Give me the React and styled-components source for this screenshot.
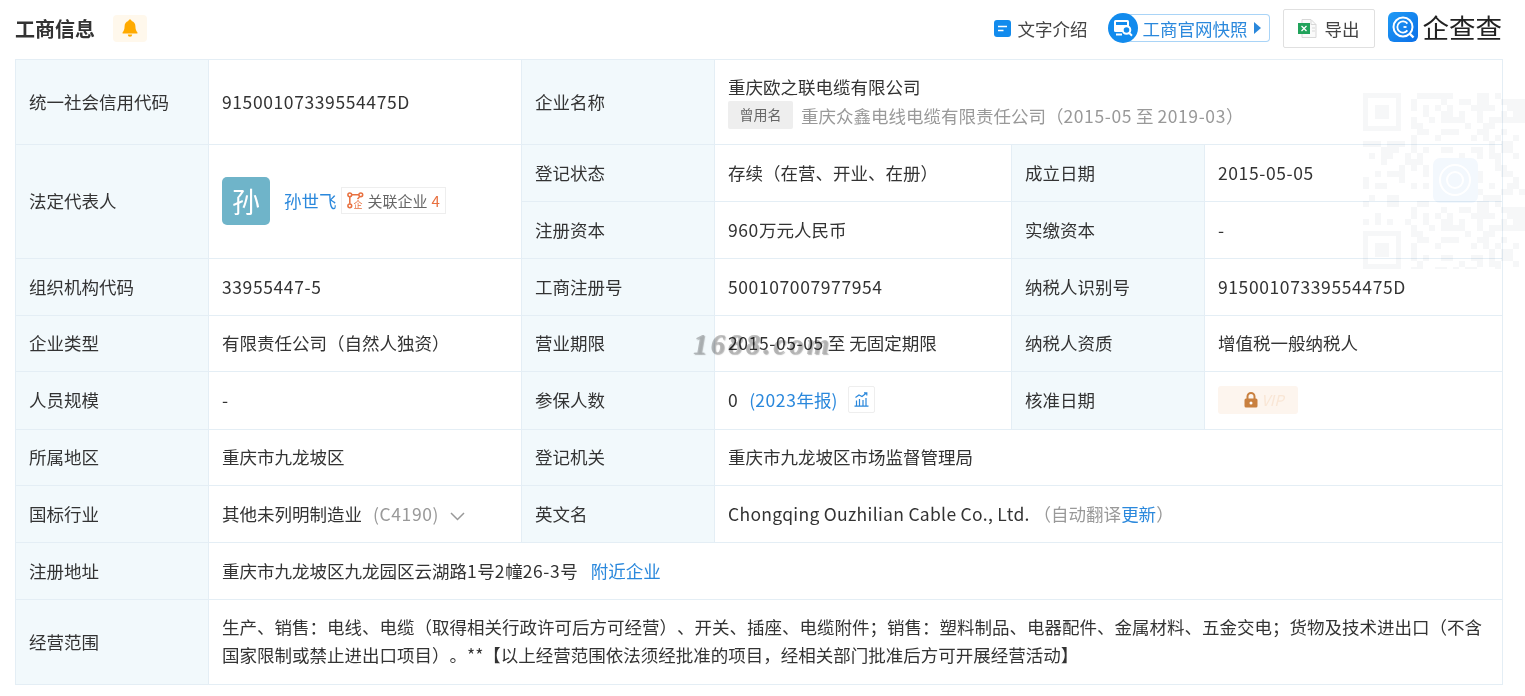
import React from 'react';
import styled, { createGlobalStyle } from 'styled-components';

const GlobalStyle = createGlobalStyle`
  html, body {
    margin: 0;
    padding: 0;
    background: #fff;
    overflow: hidden;
  }
  body {
    font-family: "Noto Sans CJK SC", "Liberation Sans", sans-serif;
    color: #333;
    text-spacing-trim: space-all;
  }
`;

const blue = '#2a88dc';

const qrCells = () => {
  const cells = [];
  let seed = 71;
  for (let y = 0; y < 30; y++) {
    for (let x = 0; x < 28; x++) {
      seed = (seed * 137 + 59) % 1009;
      const inFinder = (x < 8 && y < 8) || (x < 8 && y > 21);
      const inLogo = x > 10 && x < 19 && y > 10 && y < 19;
      if (!inFinder && !inLogo && seed % 5 < 2) cells.push([x, y]);
    }
  }
  return cells;
};

const Finder = ({ y }) => (
  <g>
    <rect x="2.5" y={y + 2.500} width="33" height="33" fill="none" stroke="#f6f7f8" strokeWidth="5" />
    <rect x="12" y={y + 12} width="14" height="14" fill="#f6f7f8" />
  </g>
);

const LogoMark = () => (
  <svg width="30" height="30" viewBox="0 0 30 30">
    <defs>
      <linearGradient id="logoBlue" x1="0" y1="0" x2="1" y2="1">
        <stop offset="0" stopColor="#1f9bf5" />
        <stop offset="1" stopColor="#0b6fe8" />
      </linearGradient>
    </defs>
    <rect width="30" height="30" rx="6" fill="url(#logoBlue)" />
    <circle cx="15" cy="15" r="9.500" fill="none" stroke="#fff" strokeWidth="2" />
    <path d="M19.400 11.600a5.600 5.600 0 1 0 0 6.800" fill="none" stroke="#fff" strokeWidth="1.800" />
    <path d="M15.500 15h3" stroke="#fff" strokeWidth="1.800" />
    <path d="M21.500 21.500l4 4" stroke="#fff" strokeWidth="2.400" />
  </svg>
);

const App = () => (
  <Page>
    <GlobalStyle />
    <Header>
      <TitleGroup>
        <Title>工商信息</Title>
        <BellBadge>
          <svg width="16" height="18" viewBox="0 0 16 18">
            <path d="M8 0.500c.9 0 1.500.6 1.600 1.400 2.500.7 3.800 2.800 3.800 5.400 0 3 .7 4.600 2 6v1.200H.6v-1.200c1.300-1.400 2-3 2-6 0-2.600 1.300-4.700 3.800-5.400C6.500 1.100 7.100.5 8 .5z" fill="#ffaa00" />
            <path d="M5.800 15.600h4.400a2.200 2.200 0 0 1-4.400 0z" fill="#ffaa00" />
          </svg>
        </BellBadge>
      </TitleGroup>
      <Actions>
        <IntroLink>
          <svg width="17" height="17" viewBox="0 0 17 17">
            <rect width="17" height="17" rx="3" fill="#128bed" />
            <path d="M4 6.500h9M4 10.500h5.500" stroke="#fff" strokeWidth="1.600" />
          </svg>
          文字介绍
        </IntroLink>
        <SnapshotLink>
          <SnapshotCircle>
            <svg width="20" height="18" viewBox="0 0 20 18">
              <rect x="1" y="1" width="15" height="12" rx="1.500" fill="#fff" />
              <rect x="3" y="3" width="11" height="3" fill="#128bed" />
              <path d="M3 15.500h6" stroke="#fff" strokeWidth="2" />
              <circle cx="13.500" cy="11" r="3.800" fill="#128bed" stroke="#fff" strokeWidth="2" />
              <path d="M16 13.800l3 3" stroke="#fff" strokeWidth="2" />
            </svg>
          </SnapshotCircle>
          工商官网快照
          <Arrow />
        </SnapshotLink>
        <ExportButton>
          <svg width="19" height="19" viewBox="0 0 19 19">
            <path d="M4 .5h9l5 5v13H4z" fill="#fafafa" stroke="#d8d8d8" />
            <path d="M13 1v4.500h5M14 9h3M14 12h3" fill="none" stroke="#d8d8d8" />
            <rect x="0" y="4" width="12" height="11" fill="#21a35b" />
            <path d="M3.500 7l5 5M8.500 7l-5 5" stroke="#fff" strokeWidth="1.300" />
          </svg>
          导出
        </ExportButton>
        <Logo>
          <LogoMark />
          <LogoText>企查查</LogoText>
        </Logo>
      </Actions>
    </Header>

    <InfoTable>
      <colgroup>
        <col width="193" />
        <col width="313" />
        <col width="193" />
        <col width="297" />
        <col width="193" />
        <col width="298" />
      </colgroup>
      <tbody>
        <Row $h={85}>
          <Label>统一社会信用代码</Label>
          <Value><Num>91500107339554475D</Num></Value>
          <Label>企业名称</Label>
          <Value colSpan={3}>
            <CompanyName>重庆欧之联电缆有限公司</CompanyName>
            <FormerRow>
              <FormerTag>曾用名</FormerTag>
              <Muted>重庆众鑫电线电缆有限责任公司（<Num>2015-05</Num> 至 <Num>2019-03</Num>）</Muted>
            </FormerRow>
          </Value>
        </Row>
        <Row $h={57}>
          <Label rowSpan={2}>法定代表人</Label>
          <Value rowSpan={2}>
            <PersonRow>
              <Avatar>孙</Avatar>
              <BlueLink>孙世飞</BlueLink>
              <RelatedTag>
                <svg width="17" height="17" viewBox="0 0 17 17" fill="none" stroke="#e8703f" strokeWidth="1.500">
                  <circle cx="2.800" cy="2.800" r="1.900" />
                  <circle cx="13.800" cy="2.800" r="1.900" />
                  <circle cx="2.800" cy="13.800" r="1.900" />
                  <path d="M4.800 2.800h7M2.800 4.800v7M12.500 5l-2 2" />
                  <RelatedGlyph x="6.500" y="16">企</RelatedGlyph>
                </svg>
                关联企业
                <RelatedCount>4</RelatedCount>
              </RelatedTag>
            </PersonRow>
          </Value>
          <Label>登记状态</Label>
          <Value>存续（在营、开业、在册）</Value>
          <Label>成立日期</Label>
          <Value><Num>2015-05-05</Num></Value>
        </Row>
        <Row $h={57}>
          <Label>注册资本</Label>
          <Value><Num>960</Num>万元人民币</Value>
          <Label>实缴资本</Label>
          <Value>-</Value>
        </Row>
        <Row $h={57}>
          <Label>组织机构代码</Label>
          <Value><Num>33955447-5</Num></Value>
          <Label>工商注册号</Label>
          <Value><Num>500107007977954</Num></Value>
          <Label>纳税人识别号</Label>
          <Value><Num>91500107339554475D</Num></Value>
        </Row>
        <Row $h={56}>
          <Label>企业类型</Label>
          <Value>有限责任公司（自然人独资）</Value>
          <Label>营业期限</Label>
          <Value><Num>2015-05-05</Num> 至 无固定期限</Value>
          <Label>纳税人资质</Label>
          <Value>增值税一般纳税人</Value>
        </Row>
        <Row $h={58}>
          <Label>人员规模</Label>
          <Value>-</Value>
          <Label>参保人数</Label>
          <Value>
            <InlineRow>
              <Num>0</Num>
              <BlueLink>(<Num>2023</Num>年报)</BlueLink>
              <ChartButton>
                <svg width="15" height="15" viewBox="0 0 15 15" fill="none" stroke="#2a88dc" strokeWidth="1.200">
                  <path d="M0.500 14.200h14M2.500 13.500V8.500M5.500 13.500V7M9 13.500V8M12 13.500V6M1.500 5.500l3.500-2.500 3 1.500L12.500 1M10 .8h2.800v2.600" />
                </svg>
              </ChartButton>
            </InlineRow>
          </Value>
          <Label>核准日期</Label>
          <Value>
            <VipLock>
              <svg width="14" height="16" viewBox="0 0 14 16">
                <path d="M3.500 7V4.500a3.500 3.500 0 0 1 7 0V7" fill="none" stroke="#c9803f" strokeWidth="2" />
                <rect x="0.500" y="6.500" width="13" height="9" rx="1.500" fill="#c9803f" />
                <circle cx="7" cy="11" r="1.500" fill="#fff" />
              </svg>
              <VipText>VIP</VipText>
            </VipLock>
          </Value>
        </Row>
        <Row $h={56}>
          <Label>所属地区</Label>
          <Value>重庆市九龙坡区</Value>
          <Label>登记机关</Label>
          <Value colSpan={3}>重庆市九龙坡区市场监督管理局</Value>
        </Row>
        <Row $h={57}>
          <Label>国标行业</Label>
          <Value>
            <InlineRow>
              其他未列明制造业
              <Muted><Num>(C4190)</Num></Muted>
              <Chevron width="15" height="9" viewBox="0 0 15 9" fill="none" stroke="#999" strokeWidth="1.500">
                <path d="M1 1l6.500 6.500L14 1" />
              </Chevron>
            </InlineRow>
          </Value>
          <Label>英文名</Label>
          <Value colSpan={3}>
            <EnglishName>Chongqing Ouzhilian Cable Co., Ltd.</EnglishName>
            <Muted>&nbsp;（自动翻译<BlueLink>更新</BlueLink>）</Muted>
          </Value>
        </Row>
        <Row $h={57}>
          <Label>注册地址</Label>
          <Value colSpan={5}>
            <InlineRow>
              <span>重庆市九龙坡区九龙园区云湖路<Num>1</Num>号<Num>2</Num>幢<Num>26-3</Num>号</span>
              <NearbyLink>附近企业</NearbyLink>
            </InlineRow>
          </Value>
        </Row>
        <Row $h={85}>
          <Label>经营范围</Label>
          <ScopeValue colSpan={5}>
            生产、销售：电线、电缆（取得相关行政许可后方可经营）、开关、插座、电缆附件；销售：塑料制品、电器配件、金属材料、五金交电；货物及技术进出口（不含国家限制或禁止进出口项目）。**【以上经营范围依法须经批准的项目，经相关部门批准后方可开展经营活动】
          </ScopeValue>
        </Row>
      </tbody>
    </InfoTable>

    <QrWatermark width="162" height="176" viewBox="0 0 162 176">
      <Finder y={0} />
      <Finder y={138} />
      {qrCells().map(([x, y]) => (
        <rect key={`${x}-${y}`} x={x * 6} y={y * 6} width="6" height="6" fill="#f6f7f8" />
      ))}
      <rect x="70" y="65" width="45" height="45" rx="7" fill="#f3f8fd" />
      <circle cx="92" cy="87" r="15" fill="none" stroke="#fff" strokeWidth="2" />
      <circle cx="92" cy="87" r="8" fill="none" stroke="#fff" strokeWidth="2" />
    </QrWatermark>
    <SiteMark>1688.com</SiteMark>
  </Page>
);

const Page = styled.div`
  position: relative;
  width: 1525px;
  height: 696px;
  padding: 0 23px 0 15px;
  box-sizing: border-box;
  overflow: hidden;
  font-size: 17.5px;
`;

const Header = styled.header`
  height: 59px;
  padding-bottom: 3px;
  box-sizing: border-box;
  display: flex;
  align-items: center;
  justify-content: space-between;
`;

const TitleGroup = styled.div`
  display: flex;
  align-items: center;
  gap: 18px;
`;

const Title = styled.h2`
  margin: 0;
  font-size: 20px;
  font-weight: 700;
  color: #333;
`;

const BellBadge = styled.span`
  width: 34px;
  height: 27px;
  border-radius: 4px;
  background: #fff8ec;
  display: flex;
  align-items: center;
  justify-content: center;
`;

const Actions = styled.div`
  display: flex;
  align-items: center;
`;

const IntroLink = styled.a`
  display: flex;
  align-items: center;
  gap: 7px;
  margin-right: 20px;
  color: #444;
`;

const SnapshotLink = styled.a`
  position: relative;
  display: flex;
  align-items: center;
  box-sizing: border-box;
  width: 145px;
  height: 28px;
  margin-left: 17px;
  margin-right: 13px;
  padding-left: 18px;
  border: 1px solid #a9d4f7;
  border-left: none;
  border-radius: 0 4px 4px 0;
  color: ${blue};
`;

const SnapshotCircle = styled.span`
  position: absolute;
  left: -17px;
  top: -2px;
  width: 30px;
  height: 30px;
  border-radius: 50%;
  background: #128bed;
  display: flex;
  align-items: center;
  justify-content: center;
`;

const Arrow = styled.i`
  margin-left: 6px;
  border-left: 7px solid ${blue};
  border-top: 6px solid transparent;
  border-bottom: 6px solid transparent;
`;

const ExportButton = styled.button`
  width: 92px;
  height: 39px;
  display: flex;
  align-items: center;
  justify-content: center;
  gap: 8px;
  margin-right: 13px;
  background: #fff;
  border: 1px solid #e0e0e0;
  border-radius: 2px;
  font: inherit;
  color: #444;
`;

const Logo = styled.div`
  display: flex;
  align-items: center;
  gap: 5px;
  margin-top: -3px;
`;

const LogoText = styled.span`
  font-size: 26.5px;
  line-height: 30px;
  font-weight: 400;
  color: #222;
`;

const InfoTable = styled.table`
  width: 1487px;
  table-layout: fixed;
  border-collapse: collapse;
`;

const Row = styled.tr`
  height: ${(p) => p.$h}px;
`;

const Label = styled.td`
  padding: 0 13px 2px;
  background: #f2f9fc;
  border: 1px solid #e4eef5;
  color: #333;
`;

const Value = styled.td`
  padding: 0 13px 2px;
  border: 1px solid #e4eef5;
  color: #333;
`;

const ScopeValue = styled(Value)`
  line-height: 28px;
  padding-right: 18px;
`;

const Num = styled.span`
  letter-spacing: 0.6px;
`;

const EnglishName = styled.span`
  letter-spacing: 0.3px;
`;

const CompanyName = styled.div`
  line-height: 28px;
`;

const FormerRow = styled.div`
  display: flex;
  align-items: center;
  gap: 8px;
  height: 28px;
`;

const FormerTag = styled.span`
  width: 65px;
  height: 28px;
  line-height: 27px;
  text-align: center;
  background: #eee;
  border-radius: 2px;
  font-size: 14px;
  color: #666;
`;

const Muted = styled.span`
  color: #999;
`;

const PersonRow = styled.div`
  display: flex;
  align-items: center;
`;

const Avatar = styled.span`
  width: 48px;
  height: 48px;
  margin-right: 14px;
  border-radius: 5px;
  background: #6fb4c9;
  color: #fff;
  font-size: 28px;
  line-height: 48px;
  text-align: center;
`;

const BlueLink = styled.a`
  color: ${blue};
`;

const NearbyLink = styled(BlueLink)`
  margin-left: 2px;
`;

const RelatedTag = styled.span`
  display: flex;
  align-items: center;
  gap: 4px;
  height: 27px;
  margin-left: 4px;
  padding: 0 5px;
  box-sizing: border-box;
  border: 1px solid #eee;
  font-size: 15px;
  color: #666;
`;

const RelatedGlyph = styled.text`
  font-size: 9px;
  fill: #e8703f;
  stroke: none;
`;

const RelatedCount = styled.b`
  font-weight: 400;
  color: #e8703f;
`;

const InlineRow = styled.div`
  display: flex;
  align-items: center;
  gap: 11px;
`;

const Chevron = styled.svg`
  margin-top: 6px;
`;

const ChartButton = styled.span`
  width: 27px;
  height: 27px;
  box-sizing: border-box;
  border: 1px solid #eee;
  border-radius: 2px;
  display: flex;
  align-items: center;
  justify-content: center;
`;

const VipLock = styled.div`
  width: 80px;
  height: 28px;
  display: flex;
  align-items: center;
  justify-content: center;
  gap: 3px;
  padding-left: 12px;
  box-sizing: border-box;
  background: #fdf5ee;
  border-radius: 3px;
`;

const VipText = styled.span`
  font-size: 15px;
  color: #f9e6d5;
  font-style: italic;
`;

const QrWatermark = styled.svg`
  position: absolute;
  left: 1363px;
  top: 93px;
  pointer-events: none;
  mix-blend-mode: multiply;
`;

const SiteMark = styled.span`
  position: absolute;
  left: 693px;
  top: 328px;
  font-family: "Liberation Serif", serif;
  font-size: 29px;
  font-style: italic;
  font-weight: 700;
  letter-spacing: 3px;
  color: rgba(175, 175, 175, 0.8);
  text-shadow: 1px 1px 1px rgba(120, 120, 120, 0.5);
  mix-blend-mode: multiply;
  pointer-events: none;
`;

export default App;
